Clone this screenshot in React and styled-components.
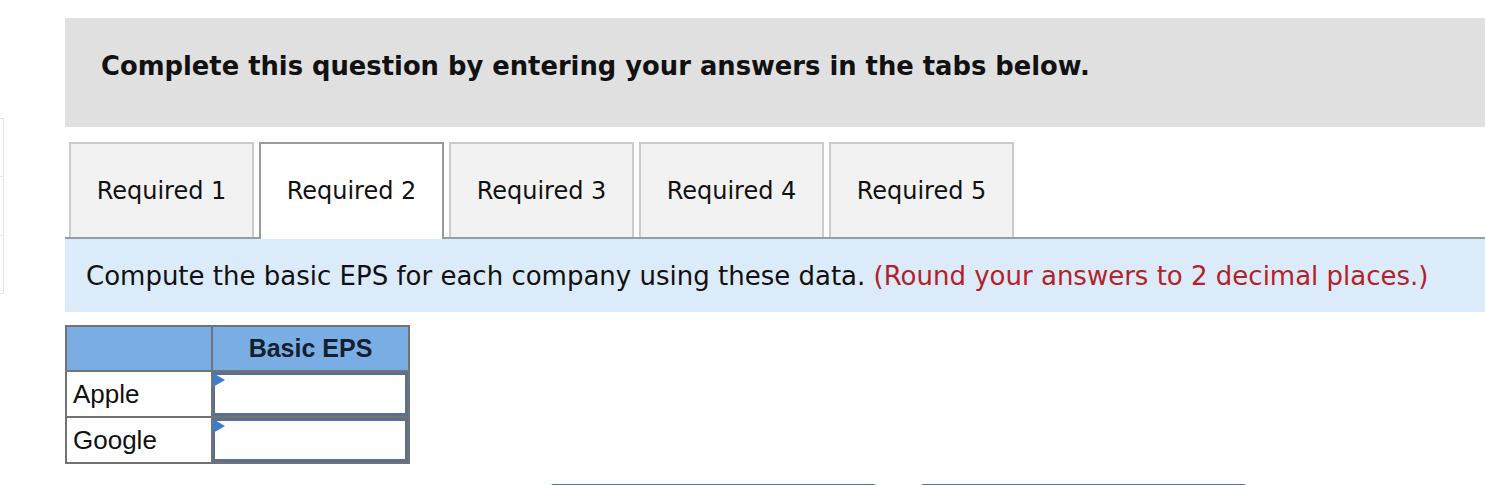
import React from 'react'
import styled, { createGlobalStyle } from 'styled-components'

const GlobalStyle = createGlobalStyle`
  html, body {
    margin: 0;
    padding: 0;
    background: #fff;
    overflow: hidden;
  }
  body {
    font-family: 'DejaVu Sans', Verdana, sans-serif;
    color: #111;
  }
`

const tabs = ['Required 1', 'Required 2', 'Required 3', 'Required 4', 'Required 5']
const rows = ['Apple', 'Google']

const App = () => {
  return (
    <Page>
      <GlobalStyle />
      <Gutter>
        <SideStub>
          <StubRow />
          <StubRow />
          <StubRow />
        </SideStub>
      </Gutter>

      <Main>
        <HeaderBand>
          <Heading>Complete this question by entering your answers in the tabs below.</Heading>
        </HeaderBand>

        <TabBar>
          {tabs.map((t, i) => (
            <Tab key={t} active={i === 1}>{t}</Tab>
          ))}
        </TabBar>

        <Instruction>
          Compute the basic EPS for each company using these data.{' '}
          <Note>(Round your answers to 2 decimal places.)</Note>
        </Instruction>

        <Table>
          <thead>
            <tr>
              <HeadCell />
              <HeadCell>Basic EPS</HeadCell>
            </tr>
          </thead>
          <tbody>
            {rows.map((r) => (
              <tr key={r}>
                <LabelCell>{r}</LabelCell>
                <InputCell>
                  <Field />
                  <Marker />
                </InputCell>
              </tr>
            ))}
          </tbody>
        </Table>

        <Footer>
          <NavButton />
          <NavButton />
        </Footer>
      </Main>
    </Page>
  )
}

const Page = styled.div`
  display: flex;
  width: 1485px;
  height: 485px;
  overflow: hidden;
`

const Gutter = styled.div`
  width: 65px;
  flex-shrink: 0;
  padding-top: 118px;
  box-sizing: border-box;
`

const SideStub = styled.div`
  width: 3px;
  height: 174px;
  border: 1px solid #e4e4e4;
  border-left: none;
  display: flex;
  flex-direction: column;
`

const StubRow = styled.div`
  flex: 1;
  border-bottom: 1px solid #ececec;
  &:last-child {
    border-bottom: none;
  }
`

const Main = styled.div`
  flex: 1;
  padding-top: 18px;
  display: flex;
  flex-direction: column;
  & > * {
    flex-shrink: 0;
  }
`

const HeaderBand = styled.div`
  background: #e0e0e0;
  height: 109px;
  box-sizing: border-box;
  padding: 33px 0 0 36px;
`

const Heading = styled.div`
  font-weight: bold;
  font-size: 25.8px;
  line-height: 30px;
  color: #111;
`

const TabBar = styled.div`
  display: flex;
  gap: 5px;
  margin-top: 15px;
  padding-left: 4px;
  border-bottom: 2px solid #9c9c9c;
  height: 95px;
`

const Tab = styled.div`
  width: 185px;
  box-sizing: border-box;
  height: ${(p) => (p.active ? '97px' : '95px')};
  background: ${(p) => (p.active ? '#fff' : '#f2f2f2')};
  border: 2px solid ${(p) => (p.active ? '#9a9a9a' : '#cbcbcb')};
  border-bottom: none;
  display: flex;
  align-items: center;
  justify-content: center;
  padding-bottom: ${(p) => (p.active ? '2px' : '0')};
  font-size: 24px;
  color: #111;
  position: relative;
  z-index: 1;
`

const Instruction = styled.div`
  background: #dcebf9;
  height: 73px;
  box-sizing: border-box;
  padding: 0 0 0 21px;
  display: flex;
  align-items: center;
  font-size: 26px;
  color: #111;
  white-space: pre;
`

const Note = styled.span`
  color: #b3222a;
`

const Table = styled.table`
  margin-top: 13px;
  border-collapse: collapse;
  width: 345px;
  font-family: 'Liberation Sans', Arial, sans-serif;
  font-size: 26px;
`

const HeadCell = styled.th`
  background: #7aade4;
  border: 2px solid #737373;
  height: 45px;
  box-sizing: border-box;
  padding: 0;
  font-weight: bold;
  font-size: 25px;
  color: #14202e;
  text-align: center;
  &:first-child {
    width: 146px;
  }
`

const LabelCell = styled.td`
  border: 2px solid #737373;
  height: 44px;
  box-sizing: border-box;
  padding: 0 0 0 6px;
  color: #111;
  background: #fff;
`

const InputCell = styled.td`
  border: 2px solid #737373;
  padding: 0;
  height: 44px;
  box-sizing: border-box;
  position: relative;
`

const Field = styled.div`
  height: 44px;
  box-sizing: border-box;
  border: 3px solid #5a7090;
  border-left-width: 2px;
  background: #fff;
`

const Marker = styled.div`
  position: absolute;
  left: 0;
  top: 1px;
  z-index: 2;
  width: 0;
  height: 0;
  border-top: 7px solid transparent;
  border-bottom: 7px solid transparent;
  border-left: 12px solid #3f7ccb;
`

const Footer = styled.div`
  display: flex;
  gap: 39px;
  padding-left: 483px;
  margin-top: 20px;
`

const NavButton = styled.div`
  width: 331px;
  height: 40px;
  border-radius: 6px;
  background: #fff;
  border: 2px solid #56708a;
  box-sizing: border-box;
  flex-shrink: 0;
`

export default App
